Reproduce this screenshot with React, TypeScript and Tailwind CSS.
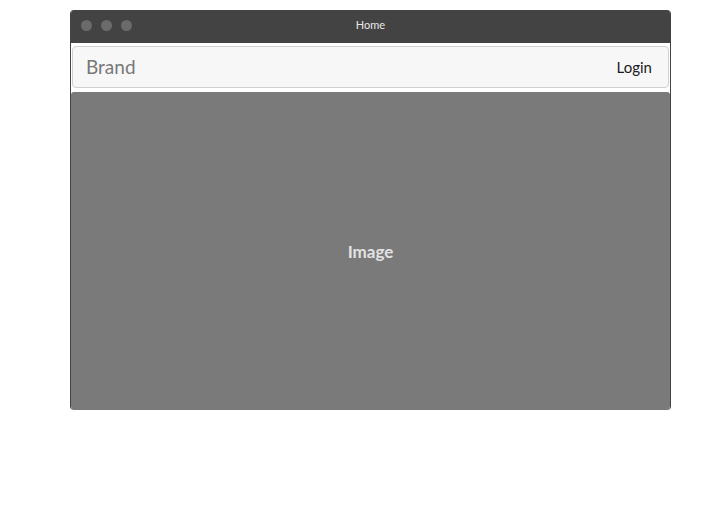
export default function App() {
  return (
    <div className="w-[722px] h-[522px] bg-white" style={{ fontFamily: "Lato, 'Noto Sans', sans-serif" }}>
      <div className="ml-[70px] pt-[10px]">
        <div className="w-[601px] h-[400px] flex flex-col rounded-[4px] overflow-hidden bg-white border-x border-[#434343]">
          <div className="h-[33px] shrink-0 bg-[#434343] relative flex items-center pl-[10px] pb-[2px] gap-[9px]">
            <span className="w-[11px] h-[11px] rounded-full bg-[#6b6b6b]" />
            <span className="w-[11px] h-[11px] rounded-full bg-[#6b6b6b]" />
            <span className="w-[11px] h-[11px] rounded-full bg-[#6b6b6b]" />
            <div className="absolute inset-0 pb-[2px] flex items-center justify-center text-[11px] text-[#e8e8e8]">
              Home
            </div>
          </div>
          <div className="px-[1px] pt-[3px] pb-[4px] shrink-0">
            <div className="h-[42px] flex items-center justify-between pl-[13px] pr-[16px] bg-[#f7f7f7] border border-[#cfcfcf] rounded-[4px]">
              <span className="text-[19px] text-[#777777]">Brand</span>
              <span className="text-[15px] text-[#1a1a1a]">Login</span>
            </div>
          </div>
          <div className="flex-1 bg-[#7a7a7a] rounded-t-[3px] flex items-center justify-center pt-[2px]">
            <span className="text-[17px] font-bold text-[#e2e2e2]">Image</span>
          </div>
        </div>
      </div>
    </div>
  );
}
